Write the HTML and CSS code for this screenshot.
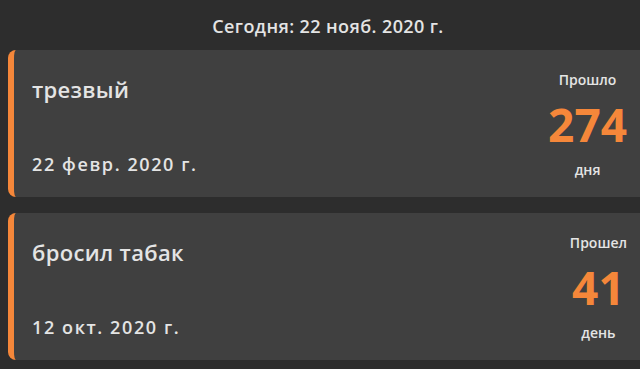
FILE: index.html
```html
<!DOCTYPE html>
<html lang="ru">
<head>
<meta charset="utf-8">
<link rel="stylesheet" href="styles.css">
</head>
<body>
<header class="today">Сегодня: 22 нояб. 2020 г.</header>
<main class="list">
  <section class="card">
    <div class="info">
      <div class="title">трезвый</div>
      <div class="date">22 февр. 2020 г.</div>
    </div>
    <div class="count">
      <div class="label">Прошло</div>
      <div class="num">274</div>
      <div class="unit">дня</div>
    </div>
  </section>
  <section class="card">
    <div class="info">
      <div class="title">бросил табак</div>
      <div class="date">12 окт. 2020 г.</div>
    </div>
    <div class="count">
      <div class="label">Прошел</div>
      <div class="num">41</div>
      <div class="unit">день</div>
    </div>
  </section>
</main>
</body>
</html>
```

FILE: styles.css
```css
html, body {
  margin: 0;
  padding: 0;
  background: #2d2d2d;
  width: 640px;
  height: 369px;
  overflow: hidden;
  font-family: "Open Sans", "Noto Sans", sans-serif;
  color: #e4e4e4;
}
.today {
  height: 50px;
  display: flex;
  align-items: center;
  justify-content: center;
  font-size: 18px;
  font-weight: 600;
  letter-spacing: 0.4px;
  padding: 1px 0 0 16px;
  box-sizing: border-box;
}
.list {
  display: flex;
  flex-direction: column;
  gap: 16px;
  padding-left: 8px;
}
.card {
  height: 147px;
  background: #404040;
  border-left: 6px solid #f5873a;
  border-radius: 8px 0 0 8px;
  display: flex;
  justify-content: space-between;
  box-sizing: border-box;
}
.info {
  display: flex;
  flex-direction: column;
  justify-content: space-between;
  padding: 25px 0 22px 18px;
}
.title {
  font-size: 22px;
  font-weight: 600;
  line-height: 28px;
  letter-spacing: 0.3px;
}
.date {
  font-size: 18px;
  font-weight: 600;
  line-height: 22px;
  letter-spacing: 1.6px;
}
.count {
  display: flex;
  flex-direction: column;
  align-items: center;
  padding: 21px 13px 0 0;
}
.label {
  font-size: 14px;
  font-weight: 600;
  line-height: 18px;
}
.num {
  font-size: 46px;
  font-weight: 700;
  line-height: 52px;
  color: #f5873a;
  margin-top: 9px;
}
.unit {
  font-size: 14px;
  font-weight: 600;
  line-height: 18px;
  margin-top: 11px;
}
```
